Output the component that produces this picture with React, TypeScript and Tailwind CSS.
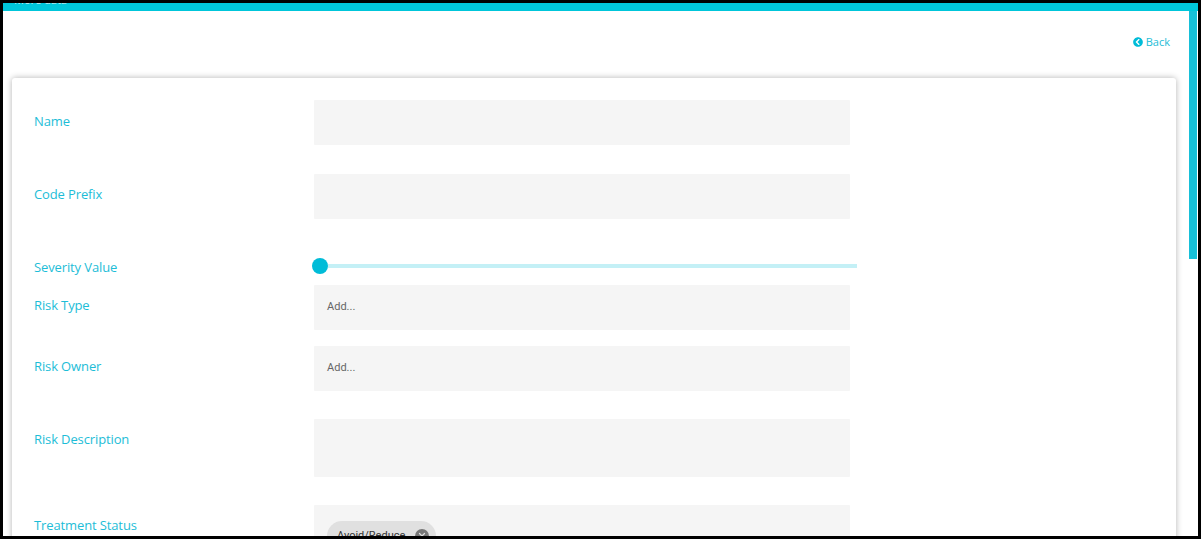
import { X } from "lucide-react";

const fieldClass = "w-[536px] bg-[#f5f5f5] rounded-[1px]";

function Label({ children, className }: { children: React.ReactNode; className?: string }) {
  return (
    <div className={`w-[280px] shrink-0 text-[13px] leading-[18px] tracking-[-0.12px] text-[#1dbdd7] ${className ?? ""}`}>
      {children}
    </div>
  );
}

function AddField({ label, className }: { label: string; className?: string }) {
  return (
    <div className={`flex ${className ?? ""}`}>
      <Label className="mt-[11px]">{label}</Label>
      <div className={`${fieldClass} h-[45px] flex items-center pl-[13px] text-[11px] text-[#666] font-['Roboto',sans-serif]`}>
        Add...
      </div>
    </div>
  );
}

export default function App() {
  return (
    <div className="h-[539px] w-[1201px] overflow-hidden border-[3px] border-black bg-white font-['Open_Sans',sans-serif] relative">
      <div className="h-[8px] bg-[#00c6da] relative overflow-hidden">
        <span className="absolute left-[11px] top-[-11px] text-[11px] leading-[15px] text-[#c8eef3]">More data</span>
      </div>

      {/* scrollbar */}
      <div className="absolute right-[1px] top-[8px] h-[248px] w-[8px] bg-[#17c0d9]" />

      <div className="flex justify-end items-center h-[67px] pr-[28px] pb-[5px] text-[#1dbdd7] text-[11px]">
        <svg viewBox="0 0 512 512" className="w-[10px] h-[10px] mr-[3px] fill-[#00bcd8]">
          <path d="M256 504C119 504 8 393 8 256S119 8 256 8s248 111 248 248-111 248-248 248zM142.100 273l135.500 135.500c9.400 9.400 24.600 9.400 33.900 0l17-17c9.400-9.400 9.400-24.600 0-33.900L226.900 256l101.600-101.600c9.400-9.400 9.400-24.600 0-33.900l-17-17c-9.400-9.400-24.600-9.400-33.900 0L142.100 239c-9.400 9.400-9.400 24.600 0 34z" />
        </svg>
        <span>Back</span>
      </div>

      <div className="ml-[9px] w-[1164px] h-[600px] bg-white rounded-[3px] shadow-[0_0_6px_rgba(0,0,0,0.3)] pl-[22px] pt-[22px]">
        <div className="flex">
          <Label className="mt-[12px]">Name</Label>
          <div className={`${fieldClass} h-[45px]`} />
        </div>

        <div className="flex mt-[29px]">
          <Label className="mt-[11px]">Code Prefix</Label>
          <div className={`${fieldClass} h-[45px]`} />
        </div>

        <div className="flex mt-[39px] h-[27px]">
          <Label>Severity Value</Label>
          <div className="w-[543px] flex items-center h-[16px]">
            <div className="w-[16px] h-[16px] ml-[-2px] rounded-full bg-[#00bcd8] shrink-0" />
            <div className="flex-1 h-[4px] bg-[#c4f0f6]" />
          </div>
        </div>

        <AddField label="Risk Type" />
        <AddField label="Risk Owner" className="mt-[16px]" />

        <div className="flex mt-[28px]">
          <Label className="mt-[11px]">Risk Description</Label>
          <div className={`${fieldClass} h-[58px]`} />
        </div>

        <div className="flex mt-[28px]">
          <Label className="mt-[11px]">Treatment Status</Label>
          <div className={`${fieldClass} h-[80px] pl-[13px] pt-[16px]`}>
            <div className="inline-flex items-center h-[30px] rounded-full bg-[#e0e0e0] pl-[10px] pr-[7px] text-[11px] text-[#333] font-['Roboto',sans-serif]">
              Avoid/Reduce
              <span className="ml-[10px] w-[14px] h-[14px] rounded-full bg-[#777] flex items-center justify-center">
                <X size={10} strokeWidth={3} color="#e0e0e0" />
              </span>
            </div>
          </div>
        </div>
      </div>
    </div>
  );
}
